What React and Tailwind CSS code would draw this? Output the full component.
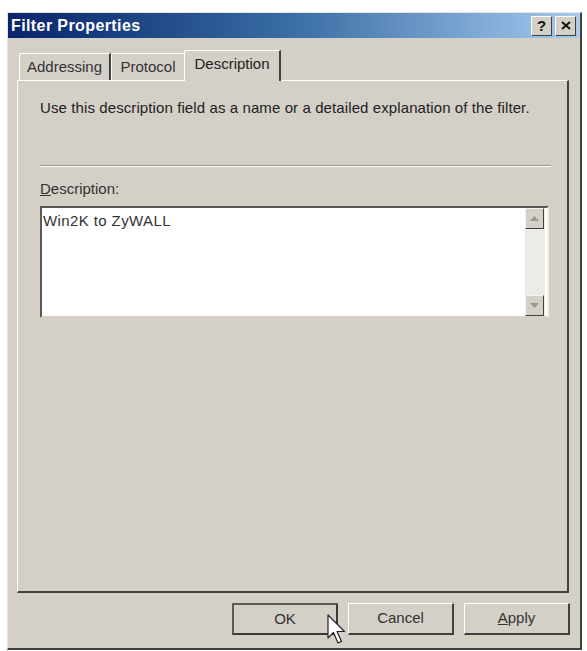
import React from 'react'

const FONT = { fontFamily: '"Liberation Sans", Arial, sans-serif' }

function TitleButton({ children }) {
  return (
    <div className="w-[21px] h-[20px] bg-[#d4d0c8] border border-t-[#ffffff] border-l-[#ffffff] border-r-[#404040] border-b-[#404040] flex items-center justify-center text-[15px] font-bold text-[#111] leading-none">
      {children}
    </div>
  )
}

function ScrollArrow({ up }) {
  return (
    <div className="w-[19px] h-[21px] bg-[#d4d0c8] border border-t-[#f4f3ef] border-l-[#f4f3ef] border-r-[#404040] border-b-[#404040] flex items-center justify-center">
      <svg width="9" height="5" viewBox="0 0 9 5">
        {up ? <path d="M4.5 0 L9 5 L0 5 Z" fill="#9a9890" /> : <path d="M0 0 L9 0 L4.5 5 Z" fill="#9a9890" />}
      </svg>
    </div>
  )
}

function Tab({ label, width, active }) {
  if (active) {
    return (
      <div
        className="h-[31px] -mb-[1px] -ml-[2px] relative z-10 bg-[#d4d0c8] border-t border-l border-t-[#ffffff] border-l-[#ffffff] border-r-2 border-r-[#404040] rounded-tl-[2px] flex items-center justify-center text-[15px] text-[#222] pb-[4px]"
        style={{ width }}
      >
        {label}
      </div>
    )
  }
  return (
    <div
      className="h-[27px] bg-[#d4d0c8] border-t border-l border-t-[#ffffff] border-l-[#ffffff] border-r-2 border-r-[#404040] rounded-tl-[2px] flex items-center justify-center text-[15px] text-[#333] pt-[1px]"
      style={{ width }}
    >
      {label}
    </div>
  )
}

function PushButton({ children, isDefault }) {
  return (
    <div
      className={`w-[106px] h-[32px] bg-[#d4d0c8] flex items-center justify-center text-[15px] text-[#333] ${
        isDefault
          ? 'border-2 border-[#3a3a3a] border-t-[#5a5a5a] border-l-[#5a5a5a]'
          : 'border border-t-[#ffffff] border-l-[#ffffff] border-r-[#404040] border-b-[#404040] border-r-2 border-b-2'
      }`}
    >
      {children}
    </div>
  )
}

function Cursor() {
  return (
    <svg className="absolute left-[327px] top-[614px]" width="22" height="36" viewBox="0 0 22 36">
      <path d="M1 1 L1 24 L6.5 18.5 L11 29 L14.5 27.5 L10 17.5 L17.5 17.5 Z" fill="#ffffff" stroke="#222" strokeWidth="1.2" strokeLinejoin="round" />
    </svg>
  )
}

export default function App() {
  return (
    <div className="w-[587px] h-[651px] bg-white relative overflow-hidden" style={FONT}>
      <div className="absolute left-[7px] top-[12px] w-[575px] h-[638px] bg-[#d4d0c8] border border-t-[#e6e4de] border-l-[#e6e4de] border-r-2 border-b-2 border-r-[#404040] border-b-[#404040] flex flex-col">
        {/* caption bar */}
        <div className="h-[25px] mr-[1px] bg-gradient-to-r from-[#0a246a] via-[#3a6ea5] to-[#a6caf0] flex items-center justify-between pl-[3px] pr-[3px]">
          <span className="text-white font-bold text-[16px] tracking-[0.4px]">Filter Properties</span>
          <div className="flex gap-[3px]">
            <TitleButton>?</TitleButton>
            <TitleButton>
              <svg width="10" height="9" viewBox="0 0 10 9">
                <path d="M1 1 L9 8 M9 1 L1 8" stroke="#111" strokeWidth="2" />
              </svg>
            </TitleButton>
          </div>
        </div>

        {/* tab strip */}
        <div className="mt-[12px] ml-[11px] flex items-end h-[30px]">
          <Tab label="Addressing" width={92} />
          <Tab label="Protocol" width={75} />
          <Tab label="Description" active width={97} />
        </div>

        {/* tab page */}
        <div className="ml-[9px] w-[552px] h-[513px] border border-t-[#ffffff] border-l-[#ffffff] border-r-2 border-b-2 border-r-[#404040] border-b-[#404040] pl-[22px] pr-[16px] pt-[16px]">
          <p className="text-[15px] text-[#222] tracking-[0.1px]">
            Use this description field as a name or a detailed explanation of the filter.
          </p>
          <div className="mt-[45px] h-[2px] border-t border-b border-t-[#9a978f] border-b-[#ffffff]" />
          <p className="mt-[11px] text-[15px] text-[#333]">
            <span className="underline">D</span>escription:
          </p>
          <div className="mt-[6px] w-[509px] h-[112px] bg-white border-2 border-t-[#5a5a5a] border-l-[#5a5a5a] border-r-[#f0efea] border-b-[#d4d0c8] flex">
            <div className="flex-1 pl-[1px] pt-[2px] text-[15px] text-[#333] tracking-[0.4px]">Win2K to ZyWALL</div>
            <div className="w-[20px] mr-[2px] bg-[#ecebe6] flex flex-col justify-between">
              <ScrollArrow up />
              <ScrollArrow />
            </div>
          </div>
        </div>

        {/* dialog buttons */}
        <div className="mt-[10px] ml-[224px] flex gap-[10px]">
          <PushButton isDefault>OK</PushButton>
          <PushButton>Cancel</PushButton>
          <PushButton>
            <span className="underline">A</span>pply
          </PushButton>
        </div>
      </div>
      <Cursor />
    </div>
  )
}
